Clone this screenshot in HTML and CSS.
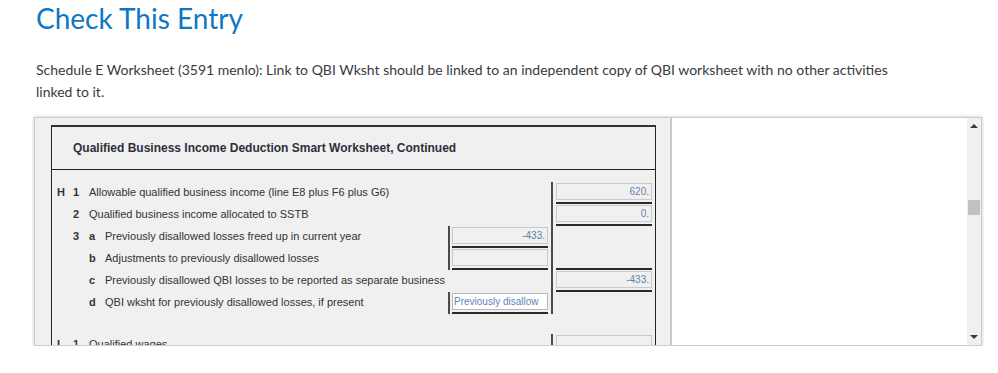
FILE: index.html
```html
<!DOCTYPE html>
<html lang="en">
<head>
  <meta charset="UTF-8">
  <title>Check This Entry</title>
  <link rel="stylesheet" href="styles.css">
</head>
<body>
  <div class="page">
    <h1 class="title">Check This Entry</h1>
    <p class="message">Schedule E Worksheet (3591 menlo): Link to QBI Wksht should be linked to an independent copy of QBI worksheet with no other activities linked to it.</p>

    <!-- Form viewer -->
    <div class="viewer">
      <div class="sheet-pane">
        <div class="form">
          <div class="form-head">Qualified Business Income Deduction Smart Worksheet, Continued</div>
          <div class="form-body">

            <div class="row">
              <div class="label"><span class="key">H</span><span class="key">1</span><span class="text">Allowable qualified business income (line E8 plus F6 plus G6)</span></div>
              <div class="cell"></div>
              <div class="cell bar"><div class="field"><div class="box">620.</div></div></div>
            </div>

            <div class="row">
              <div class="label"><span class="key"></span><span class="key">2</span><span class="text">Qualified business income allocated to SSTB</span></div>
              <div class="cell"></div>
              <div class="cell bar"><div class="field"><div class="box">0.</div></div></div>
            </div>

            <div class="row">
              <div class="label"><span class="key"></span><span class="key">3</span><span class="key">a</span><span class="text">Previously disallowed losses freed up in current year</span></div>
              <div class="cell bar"><div class="field"><div class="box">-433.</div></div></div>
              <div class="cell bar"></div>
            </div>

            <div class="row">
              <div class="label"><span class="key"></span><span class="key"></span><span class="key">b</span><span class="text">Adjustments to previously disallowed losses</span></div>
              <div class="cell bar"><div class="field"><div class="box"></div></div></div>
              <div class="cell bar"><div class="field"><div class="box hidden"></div></div></div>
            </div>

            <div class="row">
              <div class="label"><span class="key"></span><span class="key"></span><span class="key">c</span><span class="text">Previously disallowed QBI losses to be reported as separate business</span></div>
              <div class="cell"></div>
              <div class="cell bar"><div class="field"><div class="box">-433.</div></div></div>
            </div>

            <div class="row">
              <div class="label"><span class="key"></span><span class="key"></span><span class="key">d</span><span class="text">QBI wksht for previously disallowed losses, if present</span></div>
              <div class="cell bar"><div class="field"><div class="box link">Previously disallow</div></div></div>
              <div class="cell bar"></div>
            </div>

            <div class="spacer"></div>

            <div class="row">
              <div class="label"><span class="key">I</span><span class="key">1</span><span class="text">Qualified wages</span></div>
              <div class="cell"></div>
              <div class="cell bar"><div class="field"><div class="box"></div></div></div>
            </div>

          </div>
        </div>
      </div>
      <div class="blank-pane"></div>
      <div class="scrollbar">
        <span class="arrow-up"></span>
        <span class="thumb"></span>
        <span class="track"></span>
        <span class="arrow-down"></span>
      </div>
    </div>
  </div>
</body>
</html>
```

FILE: styles.css
```css
body {
  margin: 0;
  background: #fff;
  font-family: Lato, "Open Sans", sans-serif;
}

.page {
  padding-left: 34px;
}

.title {
  margin: 0;
  font-size: 28px;
  line-height: 36px;
  font-weight: 400;
  color: #0d77c4;
  padding-left: 2px;
}

.message {
  margin: 23px 0 0;
  padding-left: 2px;
  max-width: 860px;
  font-size: 14px;
  line-height: 22px;
  color: #393a3d;
}

/* Form viewer */
.viewer {
  margin-top: 14px;
  width: 948px;
  height: 229px;
  box-sizing: border-box;
  border: 1px solid #cdcdcd;
  box-shadow: 0 0 3px rgba(0, 0, 0, 0.25);
  display: flex;
  overflow: hidden;
  font-family: "Liberation Sans", Arial, sans-serif;
}

.sheet-pane {
  width: 619px;
  flex: none;
  background: #f0f0f0;
  border-right: 2px solid #c9c9c9;
  padding: 7px 0 0 16px;
  overflow: hidden;
}

.form {
  width: 603px;
  border: 1px solid #222;
  border-top: 2px solid #333;
  border-bottom: none;
}

.form-head {
  height: 42px;
  line-height: 42px;
  padding-left: 21px;
  border-bottom: 1px solid #222;
  font-size: 12px;
  font-weight: bold;
  color: #2e2f3b;
}

.form-body {
  padding-top: 12px;
}

.row {
  display: grid;
  grid-template-columns: 396px 103px 104px;
  height: 22px;
}

.spacer {
  height: 20px;
}

.label {
  display: flex;
  align-items: center;
  padding: 0 0 2px 5px;
  font-size: 11px;
  color: #333;
  white-space: nowrap;
}

.key {
  width: 16px;
  flex: none;
  font-weight: bold;
}

.cell {
  box-sizing: border-box;
}

.cell.bar {
  border-left: 2px solid #4a4a4a;
  padding-left: 2px;
}

.cell.bar:last-child {
  padding-left: 3px;
}

.field {
  width: 96px;
  margin-top: 1px;
  padding-bottom: 2px;
  border-bottom: 2px solid #2a2a2a;
}

.box {
  height: 17px;
  box-sizing: border-box;
  border: 1px solid #c9c9c9;
  background: #f0f0f0;
  font-size: 10px;
  line-height: 15px;
  text-align: right;
  padding-right: 2px;
  color: #5f83ad;
  overflow: hidden;
  white-space: nowrap;
}

.box.hidden {
  visibility: hidden;
}

.box.link {
  background: #fff;
  border-color: #b9b9b9;
  text-align: left;
  padding-left: 1px;
  color: #5b86b8;
}

.blank-pane {
  flex: 1;
  background: #fff;
}

.scrollbar {
  width: 14px;
  flex: none;
  background: #f0f0f0;
  display: flex;
  flex-direction: column;
  align-items: center;
}

.arrow-up,
.arrow-down {
  width: 0;
  height: 0;
  border-left: 4px solid transparent;
  border-right: 4px solid transparent;
}

.arrow-up {
  margin-top: 6px;
  border-bottom: 4px solid #3a3a3a;
}

.arrow-down {
  margin-bottom: 6px;
  border-top: 4px solid #3a3a3a;
}

.thumb {
  width: 12px;
  height: 15px;
  margin-top: 72px;
  background: #c1c1c1;
}

.track {
  flex: 1;
}
```
